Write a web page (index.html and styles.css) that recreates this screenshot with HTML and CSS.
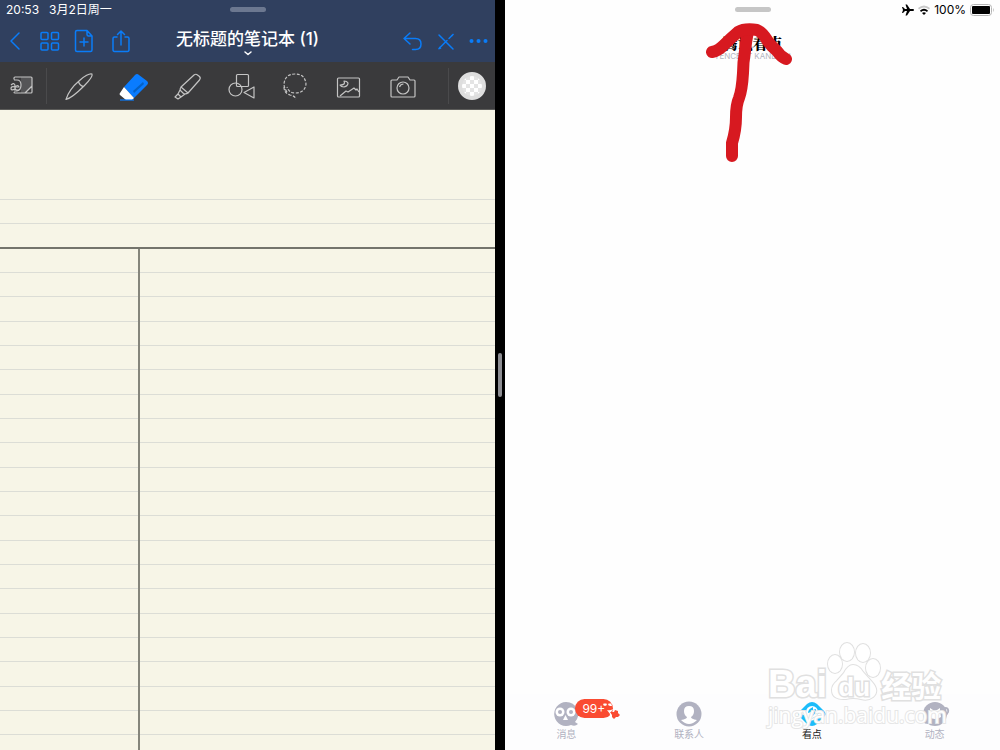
FILE: index.html
```html
<!DOCTYPE html>
<html lang="zh-CN">
<head>
    <meta charset="UTF-8">
    <meta name="viewport" content="width=device-width, initial-scale=1.0">
    <title>无标题的笔记本 (1)</title>
    <link rel="stylesheet" href="styles.css">
</head>
<body>
    <div class="split">
        <section class="pane notes">
            <header class="notes-head">
                <div class="status">
                    <span>20:53</span>
                    <span>3月2日周一</span>
                    <i class="handle"></i>
                </div>
                <div class="nav">
                    <div class="nav-group">
                        <button aria-label="返回"><svg width="30" height="30" viewBox="0 0 30 30"><path d="M19 7l-8 8 8 8"/></svg></button>
                        <button aria-label="缩略图"><svg width="30" height="30" viewBox="0 0 30 30"><rect x="6" y="6.500" width="7" height="7" rx="1"/><rect x="16.500" y="6.500" width="7" height="7" rx="1"/><rect x="6" y="17" width="7" height="7" rx="1"/><rect x="16.500" y="17" width="7" height="7" rx="1"/></svg></button>
                        <button aria-label="添加页面"><svg width="30" height="30" viewBox="0 0 30 30"><path d="M7 4.500h10l5 5.500v14q0 1.500-1.500 1.500h-13.500q-1.500 0-1.500-1.500v-18q0-1.500 1.500-1.500zM17 4.500v4q0 1.500 1.500 1.500h3.500M14 12v8M10 16h8"/></svg></button>
                        <button aria-label="分享"><svg width="30" height="30" viewBox="0 0 30 30"><path d="M12 11H9.500Q8 11 8 12.500v11Q8 25.500 9.500 25.500h13q1.500 0 1.500-2v-11q0-1.500-1.500-1.500H20M16 19V5M12.500 8.500l3.500-3.500 3.500 3.500"/></svg></button>
                    </div>
                    <h1><button class="title">无标题的笔记本 (1)<svg width="8" height="5" viewBox="0 0 8 5"><path d="M1 1l3 2.500 3-2.500"/></svg></button></h1>
                    <div class="nav-group right">
                        <button aria-label="撤销"><svg width="30" height="30" viewBox="0 0 30 30"><path d="M12 7l-6 5.500 6 5.500M6 12.500h11.500q5.500 0 5.500 5.500t-5.500 5.500h-3"/></svg></button>
                        <button aria-label="只读模式"><svg width="30" height="30" viewBox="0 0 30 30"><path d="M8 9l14 14M8 22.500l8-8M18 12.500l3-3"/><path class="dot" d="M20 9.500l2-2 1 1-2 2zM7.500 23.500l1-3 2 2z"/></svg></button>
                        <button aria-label="更多"><svg width="30" height="30" viewBox="0 0 30 30"><g class="dot"><circle cx="7.500" cy="15" r="2"/><circle cx="14.500" cy="15" r="2"/><circle cx="21.500" cy="15" r="2"/></g></svg></button>
                    </div>
                </div>
            </header>

            <div class="toolbar">
                <button class="side-tool" aria-label="放大窗口"><svg width="32" height="32" viewBox="0 0 32 32"><path class="shade" d="M14 7h11v10l-6 6h-5z"/><path d="M7 9.500V8q0-1 1-1h16q1 0 1 1v14q0 1-1 1H8q-1 0-1-1M7 10h3q4 0 4 5t-4 6H7M25 16l-7 7"/><path d="M4 15q4-3 4 1v4M8 17q-4-1-4 1.500t4 .5M8 17q3-3 4 0H8q0 4 4 3"/></svg></button>
                <div class="tools">
                    <button aria-label="钢笔"><svg width="32" height="32" viewBox="0 0 32 32"><path d="M2 29.500C4 23 9 16 15 11 20 6 26 3 28 4 29 6 25 11 20 16 15 21 7 28 2 29.500zM14.500 11.500q1 4 5 5"/></svg></button>
                    <button aria-label="橡皮擦"><svg width="32" height="32" viewBox="0 0 32 32"><path class="rubber" d="M6 17L17 5q2-2 4 0l8 6q2 2 0 4L16 28z"/><path class="rubber-side" d="M15 21l10-9 1 2-10 9z"/><path class="rubber-tip" d="M6 17l10 11-2 2H8l-6-5q-1-1 0-2z"/><path class="rubber-line" d="M2 30h14"/></svg></button>
                    <button aria-label="荧光笔"><svg width="32" height="32" viewBox="0 0 32 32"><path d="M9 17L22 5q2-1.500 3.500 0l2 1.500q1.500 1.500 0 3.500L16 23zM9 17q-1.500 2-.5 3.500l3 3q2.500 1 4.500-.5M8 20l-2 4 3 3 4-3M6 24l-3 3 3 2 3-2"/></svg></button>
                    <button aria-label="图形"><svg width="32" height="32" viewBox="0 0 32 32"><circle cx="9.500" cy="19.500" r="6.500"/><rect x="10.500" y="4.500" width="12" height="12" rx="1"/><path d="M28 17v11l-10-5.500z"/></svg></button>
                    <button aria-label="套索"><svg width="32" height="32" viewBox="0 0 32 32"><path class="dashed" d="M8 22Q5 18 5 14 6 4 16 4t11 10q-1 9-11 9-6 0-8-6M5 17q0 6 6 8 5 1 6 4"/></svg></button>
                    <button aria-label="图片"><svg width="32" height="32" viewBox="0 0 32 32"><rect x="4.500" y="8" width="22" height="19" rx="1"/><path d="M7 26l6-5 2 1 6-4 2 2 1-1 2 3M11 11q2 4-4 4 1 2 4 2 4-1 4-4-1-2-4-2z"/></svg></button>
                    <button aria-label="相机"><svg width="32" height="32" viewBox="0 0 32 32"><path d="M5 10h5l2-3h9l2 3h4q1 0 1 1v15q0 1-1 1H5q-1 0-1-1V11q0-1 1-1z"/><circle cx="16" cy="18" r="6"/><path d="M12.500 17q1-3 4-3"/></svg></button>
                </div>
                <button class="side-tool swatch" aria-label="橡皮擦大小"><i></i></button>
            </div>

            <div class="paper">
                <div class="paper-top"></div>
                <div class="paper-body">
                    <div class="cue"></div>
                    <div class="lines"></div>
                </div>
            </div>
        </section>

        <div class="divider"><i></i></div>

        <section class="pane kandian">
            <header>
                <div class="status">
                    <i class="handle"></i>
                    <svg width="12" height="12" viewBox="0 0 12 12"><path d="M0 3h1l2 2h2L3.500 0.500H5L8 5h3q1 0 1 1t-1 1H8l-3 4.500H3.500L5 7H3L1 9H0l1-3z"/></svg>
                    <svg width="12" height="10" viewBox="0 0 12 10"><path class="faint" d="M0 3q6-5 12 0l-1 1.500Q6 .5 1 4.500z"/><path d="M2 5.500q4-3.500 8 0L9 7Q6 4.500 3 7zM4 8q2-1.500 4 0L6 10z"/></svg>
                    <span>100%</span>
                    <svg width="24" height="12" viewBox="0 0 24 12"><rect class="battery" x="0.500" y="0.500" width="21" height="11" rx="3"/><rect x="2" y="2" width="18" height="8" rx="1"/><path class="faint" d="M23 4q2 2 0 4z"/></svg>
                </div>
                <div class="brand">
                    <strong>腾讯看点</strong>
                    <small>TENCENT KANDIAN</small>
                </div>
            </header>

            <nav class="tabs">
                <a href="#messages">
                    <svg width="28" height="28" viewBox="0 0 28 28"><path d="M14 2a12 12 0 1 0 5 23q4 2 7-1l-3-2A12 12 0 0 0 14 2z"/><g class="white"><circle cx="8" cy="12" r="4.500"/><circle cx="19" cy="12" r="4.500"/><path d="M13.500 15l-2.500 5h5z"/></g><circle cx="8" cy="12" r="2"/><circle cx="19" cy="12" r="2"/></svg>
                    <span>消息</span>
                    <b class="badge">99+<svg width="18" height="18" viewBox="0 0 18 18"><path class="white" d="M2 4l1-2 1 1 1-1 1 2-2 1zM7 4l1-2 1 1 1-1 1 3-2 0z"/><path class="white" d="M6 9q3 1 6-1l-2 3 1 6H8l1-4z"/><path class="spark" d="M9 11l4 0 1-2 3 1 0 2 2 2-2 2-2 0-2 2-2-2 0-2z"/></svg></b>
                </a>
                <a href="#contacts">
                    <svg width="28" height="28" viewBox="0 0 28 28"><circle cx="14" cy="14" r="12.500"/><path class="white" d="M14 6q5 0 5 5 0 4-3 6 0 2 6 3-4 4-8 4t-8-4q6-1 6-3-3-2-3-6 0-5 5-5z"/></svg>
                    <span>联系人</span>
                </a>
                <a href="#kandian" class="active">
                    <svg width="28" height="28" viewBox="0 0 28 28"><path d="M9 4q5-4 10 0l7 7q3 3 0 6l-7 7q-5 4-10 0l-7-7q-3-3 0-6z"/><path class="eye" d="M3 13q5 1 8 5 3 3 6 0 3-4 8-5"/><circle class="white" cx="14" cy="12" r="6"/><path d="M15 7q-5 2-5 6l3-1 0 5q5-3 5-8l-3 1z"/></svg>
                    <span>看点</span>
                </a>
                <a href="#moments">
                    <svg width="28" height="28" viewBox="0 0 28 28"><circle cx="14" cy="14" r="12"/><path class="orbit" d="M24 8q4 0 3 4-2 5-12 9T3 21"/><path class="white" d="M9 11V8l3 2h4l3-2v3l1 6q-6 4-12 0z"/></svg>
                    <span>动态</span>
                </a>
            </nav>

            <svg class="arrow" width="100" height="150" viewBox="0 0 100 150"><path d="M31 141v-13Q35 115 35 102q0-12 3-19 3-8 4-25 0-10 2-22 1-10 3-20"/><path d="M11 37Q17 36 23 30 30 23 37 17q7-4 19-2 5 2 10 10 3 5 10 11 4 6 9 8"/></svg>

            <div class="watermark">
                <div class="mark">
                    <span>Bai</span>
                    <div class="paw">
                        <svg width="54" height="58" viewBox="0 0 54 58"><ellipse cx="8" cy="22" rx="7" ry="9"/><ellipse cx="20" cy="10" rx="7" ry="9"/><ellipse cx="36" cy="11" rx="7" ry="9"/><ellipse cx="46" cy="26" rx="7" ry="9"/><path d="M26 23q6 0 10 7l9 10q8 9 1 15-5 4-12 2-8-2-15 0-14 1-14-9 0-5 5-9l7-8q4-8 9-8z"/></svg>
                        <em>du</em>
                    </div>
                    <span class="cn">经验</span>
                </div>
                <div class="url">jingyan.baidu.com</div>
            </div>
        </section>
    </div>
</body>
</html>
```

FILE: styles.css
```css
* {
    box-sizing: border-box;
}
body {
    margin: 0;
    font-family: Inter, "Noto Sans CJK SC", sans-serif;
}
button {
    display: flex;
    align-items: center;
    justify-content: center;
    padding: 0;
    border: none;
    background: none;
    color: inherit;
    font: inherit;
    cursor: pointer;
}
svg {
    display: block;
    overflow: visible;
}
.split {
    display: grid;
    grid-template-columns: 1fr 10px 1fr;
    min-height: 100vh;
}
.pane {
    position: relative;
    display: flex;
    flex-direction: column;
    overflow: hidden;
}

/* status bar */
.status {
    position: relative;
    display: flex;
    align-items: center;
    gap: 10px;
    height: 20px;
    padding: 0 6px;
    font-size: 12px;
    line-height: 20px;
}
.handle {
    position: absolute;
    left: 50%;
    top: 7px;
    width: 36px;
    height: 5px;
    border-radius: 3px;
    background: #6c7890;
    transform: translateX(-50%);
}

/* notebook header */
.notes-head {
    background: #30405f;
    color: #fff;
}
.nav {
    display: grid;
    grid-template-columns: 1fr auto 1fr;
    height: 42px;
}
.nav-group {
    display: flex;
    align-items: center;
    gap: 5px;
}
.nav-group button {
    width: 30px;
}
.nav-group.right {
    justify-content: flex-end;
    gap: 3px;
    padding-right: 1px;
}
.nav svg {
    fill: none;
    stroke: #0a7cf8;
    stroke-width: 1.5;
    stroke-linecap: round;
    stroke-linejoin: round;
}
.nav .dot {
    fill: #0a7cf8;
    stroke: none;
}
h1 {
    margin: 0;
    font-size: 17px;
    font-weight: 500;
    line-height: 24px;
}
.title {
    flex-direction: column;
    padding-top: 7px;
}
.nav .title svg {
    stroke: #fff;
}

/* toolbar */
.toolbar {
    display: flex;
    align-items: center;
    height: 48px;
    background: #3a3a3c;
    border-bottom: 1px solid #5c5c5a;
}
.side-tool {
    width: 47px;
    height: 36px;
    border-right: 1px solid #4a4a4c;
}
.side-tool.swatch {
    border-right: none;
    border-left: 1px solid #4a4a4c;
}
.tools {
    display: flex;
    flex: 1;
    padding: 0 18px 0 6px;
}
.tools button {
    flex: 1;
}
.toolbar svg {
    fill: none;
    stroke: #c4c4c4;
    stroke-width: 1.2;
    stroke-linejoin: round;
}
.toolbar .shade {
    fill: #555557;
    stroke: none;
}
.toolbar .dashed {
    stroke-dasharray: 3 1.5;
}
.toolbar .rubber {
    fill: #0a7cff;
    stroke: none;
}
.toolbar .rubber-side {
    fill: #0561c5;
    stroke: none;
}
.toolbar .rubber-tip {
    fill: #fff;
    stroke: none;
}
.toolbar .rubber-line {
    stroke: #0a7cff;
}
.swatch i {
    width: 28px;
    height: 28px;
    border: 4px solid #dedede;
    border-radius: 50%;
    background: repeating-conic-gradient(#e4e4e4 0 25%, #fff 0 50%) 0 0 / 8px 8px;
}

/* cornell paper */
.paper {
    display: flex;
    flex: 1;
    flex-direction: column;
    background: #f7f5e7;
}
.paper-top {
    height: 139px;
    border-bottom: 2px solid #74746c;
    background:
        linear-gradient(#dcddd6, #dcddd6) 0 89px / 100% 1px no-repeat,
        linear-gradient(#dcddd6, #dcddd6) 0 113px / 100% 1px no-repeat;
}
.paper-body {
    display: grid;
    flex: 1;
    grid-template-columns: 140px 1fr;
    background: repeating-linear-gradient(
        transparent 0 23px, #dcddd6 23px 24px,
        transparent 24px 47px, #dcddd6 47px 48px,
        transparent 48px 72px, #dcddd6 72px 73px
    );
}
.cue {
    border-right: 2px solid #85857b;
}

.divider {
    display: flex;
    align-items: center;
    justify-content: center;
    background: #000;
}
.divider i {
    width: 4px;
    height: 44px;
    border-radius: 2px;
    background: #8e8e93;
}

/* right app */
.kandian {
    justify-content: space-between;
    background: #fefefe;
}
.kandian .status {
    justify-content: flex-end;
    gap: 4px;
    padding-right: 6px;
}
.kandian .handle {
    background: #c6c6c6;
}
.faint {
    fill: #c8c8c8;
}
.battery {
    fill: none;
    stroke: #b5b5b5;
}
.brand {
    display: flex;
    flex-direction: column;
    align-items: center;
    padding-top: 14px;
}
.brand strong {
    font-family: "Noto Serif CJK SC", "Noto Sans CJK SC", serif;
    font-size: 15px;
    font-weight: 900;
    line-height: 17px;
}
.brand small {
    color: #b4b5c0;
    font-size: 8px;
    line-height: 10px;
}
.arrow {
    position: absolute;
    left: 50%;
    top: 15px;
    margin-left: -52px;
    fill: none;
    stroke: #d71920;
    stroke-width: 12;
    stroke-linecap: round;
    stroke-linejoin: round;
}

/* tab bar */
.tabs {
    display: flex;
    height: 56px;
    padding: 6px 4px 0 0;
    background: #fdfdfe;
}
.tabs a {
    position: relative;
    display: flex;
    flex: 1;
    flex-direction: column;
    align-items: center;
    color: #b1b2c1;
    font-size: 10px;
    line-height: 12px;
    text-decoration: none;
}
.tabs svg {
    fill: #b1b2c1;
}
.tabs .active {
    color: #222;
}
.tabs .active svg {
    fill: #1cbcfa;
}
.tabs .white,
.tabs .active .white {
    fill: #fff;
}
.tabs .eye {
    fill: none;
    stroke: #fff;
    stroke-width: 2;
}
.tabs .orbit {
    fill: none;
    stroke: #b1b2c1;
    stroke-width: 2;
}
.badge {
    position: absolute;
    left: 50%;
    top: -1px;
    width: 38px;
    height: 19px;
    margin-left: 9px;
    padding-left: 7px;
    border-radius: 10px;
    background: #fa4b32;
    color: #fff;
    font-size: 12px;
    font-weight: 400;
    line-height: 19px;
}
.badge svg {
    position: absolute;
    right: -6px;
    top: 2px;
}
.tabs .spark {
    fill: #fa4b32;
}

/* watermark over the corner */
.watermark {
    position: absolute;
    right: 49px;
    bottom: 24px;
    width: 183px;
    color: #fff;
    pointer-events: none;
}
.mark {
    display: flex;
    align-items: flex-end;
    font: 700 38px/40px "Liberation Sans", sans-serif;
    -webkit-text-stroke: 3px #e0e0e0;
    paint-order: stroke fill;
}
.mark .cn {
    font: 700 30px/40px "Noto Sans CJK SC", sans-serif;
}
.paw {
    position: relative;
    margin-bottom: 4px;
}
.paw svg {
    fill: #fff;
    stroke: #e0e0e0;
    stroke-width: 2;
}
.paw em {
    position: absolute;
    left: 0;
    right: 0;
    bottom: 0;
    font-size: 26px;
    font-style: normal;
    line-height: 26px;
    text-align: center;
}
.url {
    font: 400 21px/22px "Open Sans", sans-serif;
    -webkit-text-stroke: 2px #e6e6e6;
    paint-order: stroke fill;
}
```
